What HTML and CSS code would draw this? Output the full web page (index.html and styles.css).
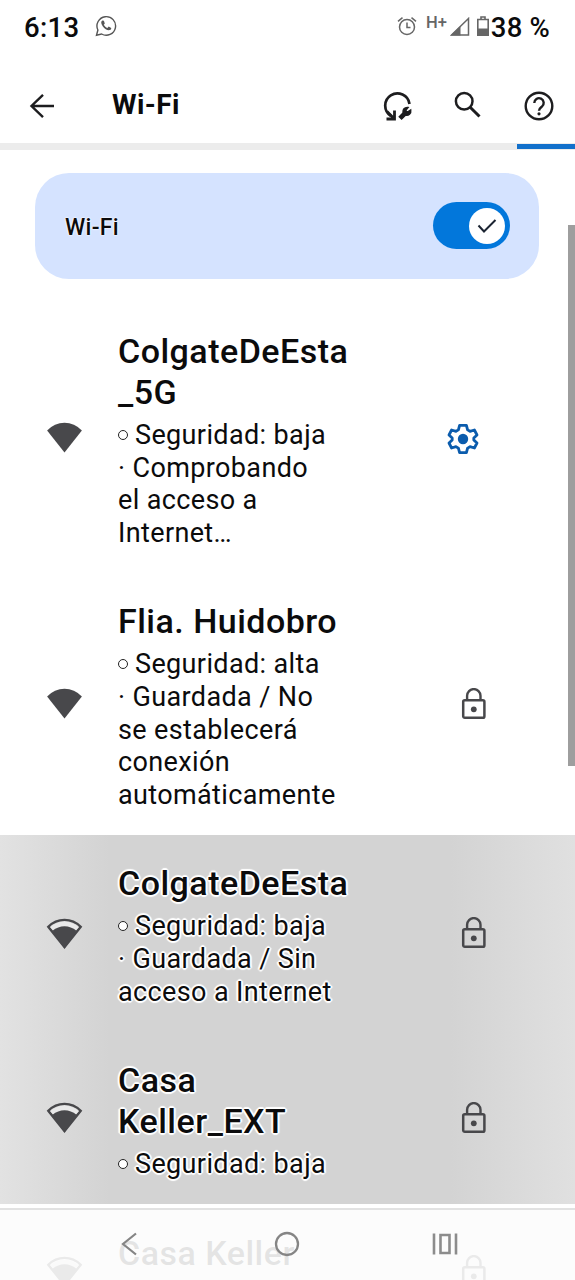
FILE: index.html
```html
<!DOCTYPE html>
<html lang="es">
<head>
<meta charset="utf-8">
<title>Wi-Fi</title>
<link rel="stylesheet" href="styles.css">
</head>
<body>
<svg class="defs" width="0" height="0">
  <symbol id="lock" viewBox="0 0 26 32">
    <rect x="2.2" y="12.2" width="21.2" height="17.6" rx="1.6" fill="none" stroke="currentColor" stroke-width="2.5"/>
    <path d="M6.1 12V7.8a6.7 6.7 0 0 1 13.4 0V12" fill="none" stroke="currentColor" stroke-width="2.4"/>
    <circle cx="12.8" cy="21.3" r="2.9" fill="currentColor"/>
  </symbol>
  <symbol id="wifi-full" viewBox="0 0 36 31">
    <path d="M.6 8.6Q8 .8 18 .8T35.400 8.600L18 30.400Z" fill="currentColor"/>
  </symbol>
  <symbol id="wifi-mid" viewBox="0 0 36 31">
    <path d="M1.800 8.800Q8.600 1.900 18 1.900T34.200 8.800L18 29Z" fill="none" stroke="currentColor" stroke-width="2.400"/>
    <path d="M3.800 9.200Q10 3.700 18 3.700T32.200 9.200L28.600 13Q24 9.400 18 9.400T7.400 13Z" fill="#e9e9e9"/>
    <path d="M6 12.800Q11.500 8.200 18 8.200T30 12.800L18 30.400Z" fill="currentColor"/>
  </symbol>
</svg>
<div class="phone">
  <header class="status">
    <span class="clock">6:13</span>
    <svg class="whatsapp" viewBox="0 0 22 22"><path d="M1.5 20.3 2.9 15A9.3 9.3 0 1 1 6.6 19Z" fill="none" stroke="#555" stroke-width="1.4"/><path d="M7.3 5.6c-1.6 1-1.4 3.200.4 5.600 2.100 2.800 5 4.600 7.200 3.900 1-.4 1.500-1.200 1.300-2L13.700 11.600l-1.300 1.400c-1.500-.6-2.800-1.700-3.600-3.200l1-1.300L8.900 5.700Z" fill="#555"/></svg>
    <span class="spacer"></span>
    <svg class="alarm" viewBox="0 0 20 20"><g fill="none" stroke="#666" stroke-width="1.5"><circle cx="10" cy="11" r="7.500"/><path d="M1 5.300 5.500 1.600M19 5.300l-4.500-3.700M10 6.500v5h3.500"/></g></svg>
    <span class="hplus">H+</span>
    <svg class="signal" viewBox="0 0 20 19"><path d="M1.500 18H18.500V1.500Z" fill="none" stroke="#666" stroke-width="1.500"/><path d="M.5 18.500 10.500 9v9.500Z" fill="#666"/></svg>
    <svg class="battery" viewBox="0 0 12 20"><path d="M.8 3.500h10.400v15.700H.8ZM4 3V1h4v2" fill="none" stroke="#666" stroke-width="1.600"/><path d="M1 12.500h10V19H1Z" fill="#666"/></svg>
    <span class="percent">38 %</span>
  </header>

  <div class="toolbar">
    <svg class="back" viewBox="0 0 26 26"><path d="M25 13H2.500M14 1.800 2.500 13 14 24.200" fill="none" stroke="#1d1d1f" stroke-width="2.400"/></svg>
    <h1>Wi-Fi</h1>
    <span class="spacer"></span>
    <svg class="repair" viewBox="0 0 30 30"><path d="M8 25A12.200 12.200 0 1 1 26.500 13" fill="none" stroke="#1d1d1f" stroke-width="2.700"/><path d="M3.500 28h8v-8.500M4 20.500l7 7" fill="none" stroke="#1d1d1f" stroke-width="2.800"/><path d="M16.300 25.800 20 22c-.6-3.200 1.600-6 5-5.500l-2.400 3 1.800 1.700 3.300-2.200c.6 3.600-2.100 6-5.300 5.200L18.600 28Z" fill="#1d1d1f" stroke="#1d1d1f" stroke-width="1.500"/></svg>
    <svg class="search" viewBox="0 0 27 27"><circle cx="10.200" cy="10.200" r="8.300" fill="none" stroke="#1d1d1f" stroke-width="2.500"/><path d="m16.200 16.200 9.300 9.300" stroke="#1d1d1f" stroke-width="3"/></svg>
    <svg class="help" viewBox="0 0 30 30"><circle cx="15" cy="15" r="13.300" fill="none" stroke="#1d1d1f" stroke-width="2.400"/><path d="M10.300 12a4.700 4.700 0 1 1 7.600 3.600c-1.800 1.400-2.900 2-2.900 4.200" fill="none" stroke="#1d1d1f" stroke-width="2.400"/><circle cx="15" cy="22.800" r="1.600" fill="#1d1d1f"/></svg>
  </div>
  <div class="progress"><div class="progress-bar"></div></div>

  <section class="switch-card">
    <span class="switch-label">Wi-Fi</span>
    <div class="switch"><div class="thumb"><svg viewBox="0 0 20 14"><path d="m1.500 6.500 5.500 6L18.500 1" fill="none" stroke="#1b2432" stroke-width="2"/></svg></div></div>
  </section>

  <main class="networks">
    <article class="network">
      <svg class="wifi"><use href="#wifi-full"/></svg>
      <div class="info">
        <h2>ColgateDeEsta<br>_5G</h2>
        <p><i class="bullet"></i>Seguridad: baja<br>· Comprobando<br>el acceso a<br>Internet…</p>
      </div>
      <svg class="gear" viewBox="0 0 32 32"><path d="M12.600 2.300h6.800l1.200 4.600 2.400 1.400 4.400-1.300 2.600 5-3.200 3v2l3.200 3-2.600 5-4.400-1.300-2.400 1.400-1.200 4.600h-6.800l-1.200-4.600L9 23.700 4.600 25 2 20l3.200-3v-2L2 12l2.600-5L9 8.300l2.400-1.400Z" fill="none" stroke="#0b5cad" stroke-width="2.800" stroke-linejoin="round"/><circle cx="16" cy="16" r="5.200" fill="#0b5cad"/></svg>
    </article>
    <article class="network">
      <svg class="wifi"><use href="#wifi-full"/></svg>
      <div class="info">
        <h2>Flia. Huidobro</h2>
        <p><i class="bullet"></i>Seguridad: alta<br>· Guardada / No<br>se establecerá<br>conexión<br>automáticamente</p>
      </div>
      <svg class="lock"><use href="#lock"/></svg>
    </article>
    <div class="pressed">
      <article class="network">
        <svg class="wifi"><use href="#wifi-mid"/></svg>
        <div class="info">
          <h2>ColgateDeEsta</h2>
          <p><i class="bullet"></i>Seguridad: baja<br>· Guardada / Sin<br>acceso a Internet</p>
        </div>
        <svg class="lock"><use href="#lock"/></svg>
      </article>
      <article class="network">
        <svg class="wifi"><use href="#wifi-mid"/></svg>
        <div class="info">
          <h2>Casa<br>Keller_EXT</h2>
          <p><i class="bullet"></i>Seguridad: baja</p>
        </div>
        <svg class="lock"><use href="#lock"/></svg>
      </article>
    </div>
    <article class="network faded">
      <svg class="wifi"><use href="#wifi-mid"/></svg>
      <div class="info"><h2>Casa Keller</h2></div>
      <svg class="lock"><use href="#lock"/></svg>
    </article>
  </main>

  <div class="scrollbar"></div>
  <nav class="navbar">
    <svg class="nav-back" viewBox="0 0 16 24"><path d="M15 1.500 2 12l13 10.500" fill="none" stroke="#858585" stroke-width="2.200"/></svg>
    <svg class="nav-home" viewBox="0 0 26 26"><circle cx="13" cy="13" r="11" fill="none" stroke="#858585" stroke-width="2.300"/></svg>
    <svg class="nav-recent" viewBox="0 0 26 22"><path d="M2 .5v21M24 .5v21M8.500 2h9v18h-9Z" fill="none" stroke="#8c8c8c" stroke-width="2.600"/></svg>
  </nav>
</div>
</body>
</html>
```
FILE: styles.css
```css
* { box-sizing: border-box; }
body { margin: 0; background: #fff; color: #0b0b0c; font-family: Roboto, "Liberation Sans", sans-serif; }
svg { display: block; flex: none; }
.defs { position: absolute; }
.phone { position: relative; width: 575px; height: 1280px; overflow: hidden; background: #fff; }
.spacer { flex: 1; }

.status { display: flex; align-items: center; height: 54px; padding: 0 25px 0 24px; }
.clock { font-size: 27.500px; font-weight: 500; letter-spacing: .3px; }
.whatsapp { width: 22px; height: 22px; margin: -2px 0 0 16px; }
.alarm { width: 20px; height: 20px; margin-top: -3px; }
.hplus { margin: -9px 3px 0 9px; font-size: 16.500px; font-weight: 500; color: #666; }
.signal { width: 20px; height: 19px; margin-top: -2px; }
.battery { width: 12px; height: 20px; margin: -2px 2px 0 7px; }
.percent { font-size: 27.500px; font-weight: 500; letter-spacing: .2px; }

.toolbar { display: flex; align-items: center; height: 89px; padding: 12px 21px 0 29px; }
.back { width: 26px; height: 26px; margin-top: 3px; }
.toolbar h1 { margin: 0 0 0 57px; font-size: 28px; font-weight: 700; line-height: 34px; letter-spacing: .4px; }
.repair { width: 30px; height: 30px; margin: 3px 41px 0 0; }
.search { width: 27px; height: 27px; margin: 0 43px 0 0; }
.help { width: 30px; height: 30px; margin-top: 3px; }

.progress { height: 7px; background: #ececec; }
.progress-bar { width: 58px; height: 5px; margin-left: auto; background: #1270cb; transform: translateY(1px); }

.switch-card { display: flex; align-items: center; justify-content: space-between; width: 504px; height: 106px; margin: 23px 0 0 35px; padding: 0 29px 1px 30px; border-radius: 34px; background: #d5e3ff; }
.switch-label { margin-top: 3px; font-size: 23px; font-weight: 500; letter-spacing: .3px; text-shadow: 0 0 2px #fff, 0 0 2px #fff, 0 0 1px #fff; }
.switch { display: flex; align-items: center; justify-content: flex-end; width: 77px; height: 47px; padding-right: 5px; border-radius: 24px; background: #0277db; }
.thumb { display: flex; align-items: center; justify-content: center; width: 36px; height: 36px; border-radius: 50%; background: #fff; }
.thumb svg { width: 20px; height: 14px; }

.networks { padding-top: 24px; }
.network { display: flex; align-items: center; padding: 28px 0 24px 46px; color: #48484b; }
.wifi { width: 37px; height: 31px; margin: -5px 35px 0 0; }
.info { width: 240px; color: #0b0b0c; white-space: nowrap; }
.info h2 { margin: 0; font-size: 34px; font-weight: 500; line-height: 41px; letter-spacing: .48px; }
.info p { margin: 6px 0 0; font-size: 27px; line-height: 32.600px; letter-spacing: .37px; }
.bullet { display: inline-block; width: 10px; height: 10px; margin-right: 7px; border: 1.500px solid #222; border-radius: 50%; background: #fff; vertical-align: 4px; }
.gear { width: 32px; height: 32px; margin: -3px 0 0 89px; }
.lock { width: 26px; height: 32px; margin: -5px 0 0 103px; }

.pressed { height: 369px; background: linear-gradient(90deg, #e2e2e2 0, #d3d3d3 110px, #d3d3d3 450px, #e0e0e0 100%); }
.pressed .info { text-shadow: 0 0 1px #fff, 2px 0 1px #fff, -2px 0 1px #fff, 0 2px 1px #fff, 0 -2px 1px #fff, 1px 1px 1px #fff, -1px -1px 1px #fff, 1px -1px 1px #fff, -1px 1px 1px #fff; }
.faded { height: 124px; margin-top: 1px; align-items: flex-start; }
.faded .wifi { margin-top: 23px; }
.faded .lock { margin-top: 22px; }

.scrollbar { position: absolute; top: 225px; right: 0; width: 7px; height: 541px; background: #9e9e9e; }
.navbar { position: absolute; left: 0; top: 1208px; width: 575px; height: 72px; border-top: 2px solid #e2e2e2; background: rgba(252, 252, 252, .9); display: flex; align-items: center; padding: 0 117px 2px 121px; }
.nav-back { width: 16px; height: 24px; }
.nav-home { width: 26px; height: 26px; margin-left: 137px; }
.nav-recent { width: 26px; height: 22px; margin-left: 132px; }
```
